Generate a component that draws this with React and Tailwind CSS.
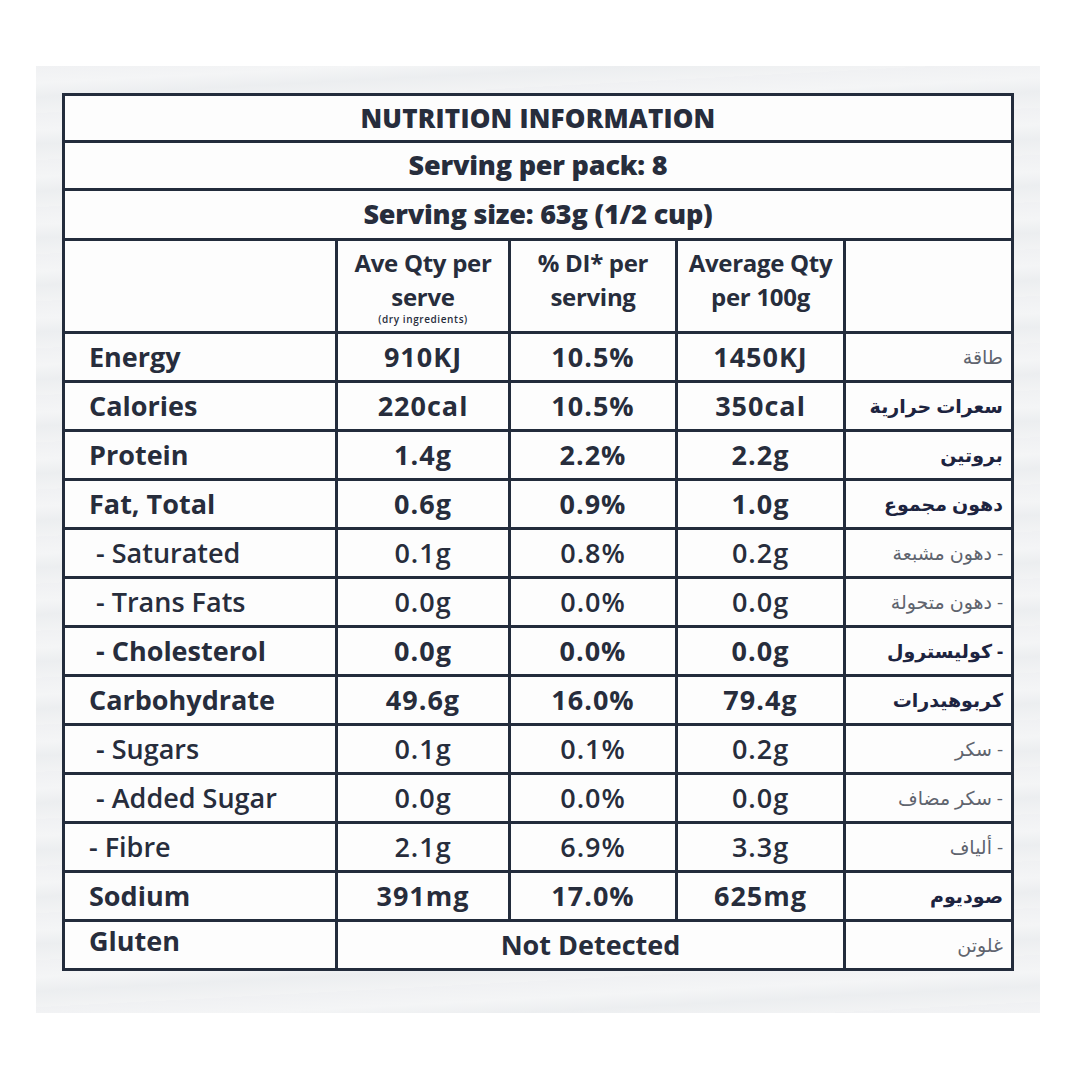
import React from "react";

// Nutrition panel rows
const rows = [
  { label: "Energy", serve: "910KJ", di: "10.5%", per100: "1450KJ", ar: "طاقة", strong: true, arStrong: false },
  { label: "Calories", serve: "220cal", di: "10.5%", per100: "350cal", ar: "سعرات حرارية", strong: true, arStrong: true },
  { label: "Protein", serve: "1.4g", di: "2.2%", per100: "2.2g", ar: "بروتين", strong: true, arStrong: true },
  { label: "Fat, Total", serve: "0.6g", di: "0.9%", per100: "1.0g", ar: "دهون مجموع", strong: true, arStrong: true },
  { label: " - Saturated", serve: "0.1g", di: "0.8%", per100: "0.2g", ar: "- دهون مشبعة", strong: false, arStrong: false },
  { label: " - Trans Fats", serve: "0.0g", di: "0.0%", per100: "0.0g", ar: "- دهون متحولة", strong: false, arStrong: false },
  { label: " - Cholesterol", serve: "0.0g", di: "0.0%", per100: "0.0g", ar: "- كوليسترول", strong: true, arStrong: true },
  { label: "Carbohydrate", serve: "49.6g", di: "16.0%", per100: "79.4g", ar: "كربوهيدرات", strong: true, arStrong: true },
  { label: " - Sugars", serve: "0.1g", di: "0.1%", per100: "0.2g", ar: "- سكر", strong: false, arStrong: false },
  { label: " - Added Sugar", serve: "0.0g", di: "0.0%", per100: "0.0g", ar: "- سكر مضاف", strong: false, arStrong: false },
  { label: "- Fibre", serve: "2.1g", di: "6.9%", per100: "3.3g", ar: "- ألياف", strong: false, arStrong: false },
  { label: "Sodium", serve: "391mg", di: "17.0%", per100: "625mg", ar: "صوديوم", strong: true, arStrong: true },
];

const font = { fontFamily: '"Open Sans", "DejaVu Sans", sans-serif' };

const Cell = ({ children, className = "" }) => (
  <div className={`bg-[#fdfdfd] flex items-center ${className}`}>{children}</div>
);

export default function App() {
  return (
    <div className="w-[1080px] h-[1080px] bg-white pt-[66px] pl-[36px]" style={font}>
      {/* Textured backdrop */}
      <div className="w-[1004px] h-[947px] pt-[27px] pl-[26px] bg-[repeating-linear-gradient(177deg,#f0f1f3_0px,#f4f5f6_17px,#eceef0_31px,#f2f3f4_47px)]">
        <div className="w-[952px] bg-[#232c3c] p-[3px] grid grid-cols-[270px_170px_164px_165px_165px] gap-[3px] text-[#272d3c]">
          {/* Title rows */}
          <Cell className="col-span-5 h-[44px] justify-center text-[26px] font-extrabold tracking-[0.2px]">
            NUTRITION INFORMATION
          </Cell>
          <Cell className="col-span-5 h-[45px] justify-center text-[27px] font-extrabold tracking-[-0.2px]">
            Serving per pack: 8
          </Cell>
          <Cell className="col-span-5 h-[47px] justify-center text-[27px] font-extrabold tracking-[-0.2px]">
            Serving size: 63g (1/2 cup)
          </Cell>

          {/* Column headings */}
          <Cell className="h-[90px]" />
          <div className="bg-[#fdfdfd] h-[90px] flex flex-col items-center pt-[5px] text-[24px] font-bold leading-[34px] tracking-[-0.3px]">
            <span>Ave Qty per</span>
            <span>serve</span>
            <span className="text-[10px] leading-[10px] font-semibold tracking-[0.6px]">(dry ingredients)</span>
          </div>
          <div className="bg-[#fdfdfd] h-[90px] flex flex-col items-center pt-[5px] text-[24px] font-bold leading-[34px] tracking-[-0.3px]">
            <span>% DI* per</span>
            <span>serving</span>
          </div>
          <div className="bg-[#fdfdfd] h-[90px] flex flex-col items-center pt-[5px] text-[24px] font-bold leading-[34px] tracking-[-0.3px]">
            <span>Average Qty</span>
            <span>per 100g</span>
          </div>
          <Cell className="h-[90px]" />

          {/* Nutrient rows */}
          {rows.map((r) => (
            <React.Fragment key={r.label}>
              <Cell
                className={`h-[46px] pl-[24px] text-[27px] whitespace-pre ${
                  r.strong ? "font-bold" : "font-semibold"
                }`}
              >
                {r.label}
              </Cell>
              {[r.serve, r.di, r.per100].map((v, i) => (
                <Cell
                  key={i}
                  className={`h-[46px] justify-center text-[27px] tracking-[1px] ${
                    r.strong ? "font-bold" : "font-semibold"
                  }`}
                >
                  {v}
                </Cell>
              ))}
              <Cell
                className={`h-[46px] justify-end pr-[8px] text-[19px] ${
                  r.arStrong ? "font-bold text-[#1d2440]" : "text-[#5f646e]"
                }`}
              >
                <span dir="rtl">{r.ar}</span>
              </Cell>
            </React.Fragment>
          ))}

          {/* Gluten */}
          <Cell className="h-[46px] pl-[24px] pb-[8px] text-[27px] font-bold">Gluten</Cell>
          <Cell className="col-span-3 h-[46px] justify-center text-[27px] font-bold">
            Not Detected
          </Cell>
          <Cell className="h-[46px] justify-end pr-[8px] text-[19px] text-[#5f646e]">
            <span dir="rtl">غلوتن</span>
          </Cell>
        </div>
      </div>
    </div>
  );
}
